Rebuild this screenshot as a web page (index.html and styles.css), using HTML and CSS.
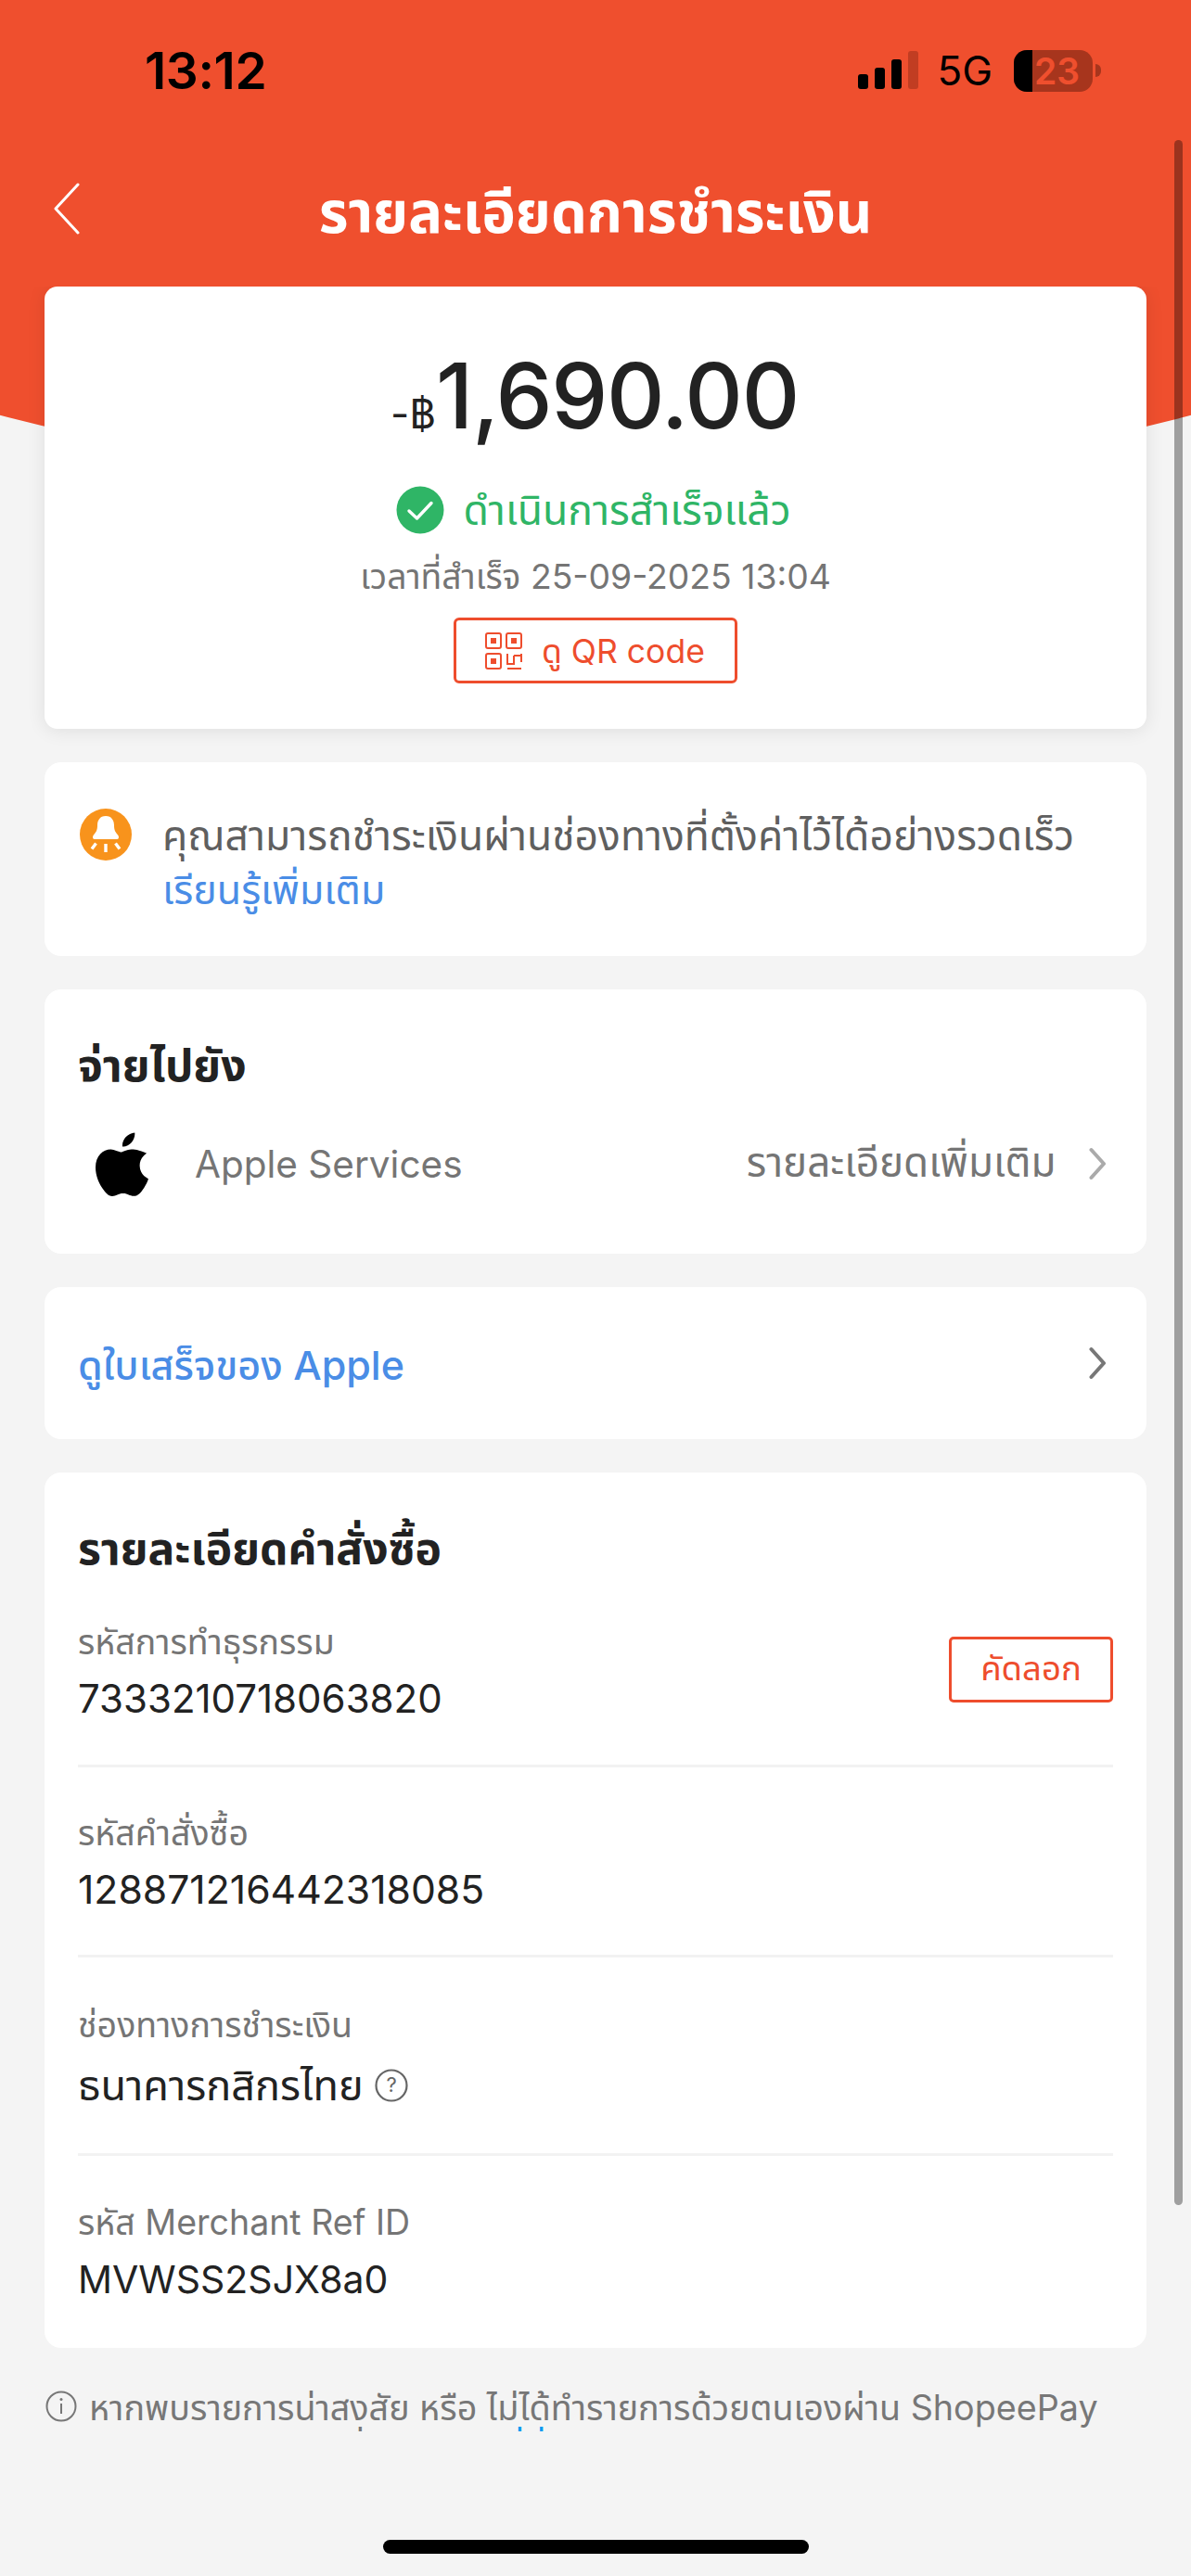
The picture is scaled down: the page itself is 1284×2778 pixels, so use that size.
FILE: index.html
```html
<!DOCTYPE html>
<html lang="th">
<head>
<meta charset="utf-8">
<title>รายละเอียดการชำระเงิน</title>
<link rel="stylesheet" href="styles.css">
</head>
<body>
<div class="screen">
  <div class="hero-bg"></div>
  <div class="statusbar">
    <span class="clock">13:12</span>
    <div class="status-right">
      <svg class="signal" width="65" height="42" viewBox="0 0 65 42"><rect x="0" y="25" width="11" height="16" rx="3" fill="#000"/><rect x="18" y="18" width="11" height="23" rx="3" fill="#000"/><rect x="36" y="9" width="11" height="32" rx="3" fill="#000"/><rect x="54" y="0" width="11" height="41" rx="3" fill="#c13d22"/></svg>
      <span class="net">5G</span>
      <div class="battery"><div class="battery-fill"></div><span class="battery-num">23</span></div>
      <div class="battery-tip"></div>
    </div>
  </div>
  <div class="navbar">
    <svg class="back" width="30" height="56" viewBox="0 0 30 56"><path d="M27 2 L3 28 L27 54" fill="none" stroke="#fff" stroke-width="3" stroke-linecap="round" stroke-linejoin="round"/></svg>
    <h1 class="title">รายละเอียดการชำระเงิน</h1>
  </div>
  <main class="content">
    <section class="card card-amount">
      <div class="amount"><span class="amount-prefix">-฿</span>1,690.00</div>
      <div class="status-line">
        <svg width="52" height="52" viewBox="0 0 52 52"><circle cx="26" cy="26" r="25.5" fill="#2fb566"/><path d="M14 27 L22.5 35 L38 18.5" fill="none" stroke="#fff" stroke-width="3.4" stroke-linecap="round" stroke-linejoin="round"/></svg>
        <span>ดำเนินการสำเร็จแล้ว</span>
      </div>
      <div class="finish-time">เวลาที่สำเร็จ 25-09-2025 13:04</div>
      <div class="qr-btn">
        <svg width="40" height="40" viewBox="0 0 40 40" fill="none" stroke="#ee4d2d" stroke-width="2"><rect x="1" y="1" width="16" height="16" rx="2"/><rect x="23" y="1" width="16" height="16" rx="2"/><rect x="1" y="23" width="16" height="16" rx="2"/><rect x="6" y="6" width="6" height="6" fill="#ee4d2d" stroke="none"/><rect x="28" y="6" width="6" height="6" fill="#ee4d2d" stroke="none"/><rect x="6" y="28" width="6" height="6" fill="#ee4d2d" stroke="none"/><path d="M24 23 V34 H31 V25 M31 25 H39 M39 23 V32 M24 39 H39"/></svg>
        <span class="qr-label">ดู QR code</span>
      </div>
    </section>

    <section class="card card-tip">
      <svg class="bell" width="56" height="56" viewBox="0 0 56 56"><circle cx="28" cy="28" r="28" fill="#f8931c"/><path d="M28 8 C21.500 8 19 13 19 18 C19 23 18 25 14.500 29 C13.500 31 14 33 16 33 H40 C42 33 42.500 31 41.500 29 C38 25 37 23 37 18 C37 13 34.500 8 28 8 Z" fill="#fff"/><path d="M28 38 V47 M17.500 37.500 L13 43.500 M38.500 37.500 L43 43.500" stroke="#fff" stroke-width="3.400" fill="none"/></svg>
      <p class="tip-text">คุณสามารถชำระเงินผ่านช่องทางที่ตั้งค่าไว้ได้อย่างรวดเร็ว <a class="link">เรียนรู้เพิ่มเติม</a></p>
    </section>

    <section class="card card-payee">
      <h2 class="section-title">จ่ายไปยัง</h2>
      <div class="payee-row">
        <svg class="apple" width="57" height="70" viewBox="0 0 814 1000"><path fill="#000" d="M788 340c-6 4-108 62-108 190 0 148 130 200 134 202-1 3-21 72-69 142-43 62-88 124-156 124s-86-40-165-40c-77 0-104 41-167 41s-106-58-156-128C43 789 0 670 0 557c0-181 118-277 234-277 62 0 113 40 152 40 37 0 95-43 165-43 27 0 123 2 237 63zM555 170c29-35 50-83 50-131 0-7-1-13-2-19-47 2-104 32-138 71-27 30-52 78-52 127 0 7 1 15 2 17 3 1 8 1 12 1 43 0 97-29 128-66z"/></svg>
        <span class="payee-name">Apple Services</span>
        <span class="payee-more">รายละเอียดเพิ่มเติม</span>
        <svg class="chev" width="18" height="36" viewBox="0 0 18 36"><path d="M2.500 3 L16 18 L2.500 33" fill="none" stroke="#aaa" stroke-width="4" stroke-linecap="round" stroke-linejoin="round"/></svg>
      </div>
    </section>

    <section class="card card-receipt">
      <span class="receipt-link">ดูใบเสร็จของ Apple</span>
      <svg class="chev" width="18" height="36" viewBox="0 0 18 36"><path d="M2.500 3 L16 18 L2.500 33" fill="none" stroke="#777" stroke-width="4" stroke-linecap="round" stroke-linejoin="round"/></svg>
    </section>

    <section class="card card-order">
      <h2 class="section-title">รายละเอียดคำสั่งซื้อ</h2>
      <div class="field field-first">
        <div class="field-body">
          <div class="field-label">รหัสการทำธุรกรรม</div>
          <div class="field-value">7333210718063820</div>
        </div>
        <div class="copy-btn">คัดลอก</div>
      </div>
      <div class="field">
        <div class="field-body">
          <div class="field-label">รหัสคำสั่งซื้อ</div>
          <div class="field-value field-value-long">128871216442318085</div>
        </div>
      </div>
      <div class="field field-bank">
        <div class="field-body">
          <div class="field-label">ช่องทางการชำระเงิน</div>
          <div class="field-value field-value-thai">ธนาคารกสิกรไทย
            <svg class="help" width="36" height="36" viewBox="0 0 36 36"><circle cx="18" cy="18" r="16.500" fill="none" stroke="#666" stroke-width="2.200"/><text x="18" y="25" text-anchor="middle" class="help-q">?</text></svg>
          </div>
        </div>
      </div>
      <div class="field field-last">
        <div class="field-body">
          <div class="field-label">รหัส Merchant Ref ID</div>
          <div class="field-value field-value-ref">MVWSS2SJX8a0</div>
        </div>
      </div>
    </section>

    <div class="note">
      <svg class="note-i" width="34" height="34" viewBox="0 0 34 34"><circle cx="17" cy="17" r="15.500" fill="none" stroke="#777" stroke-width="2"/><path d="M17 14 V25" stroke="#777" stroke-width="2"/><circle cx="17" cy="9.500" r="1.500" fill="#777"/></svg>
      <p class="note-text">หากพบรายการน่าสงสัย หรือ ไม่ได้ทำรายการด้วยตนเองผ่าน ShopeePay<br>โปรดติดต่อเจ้าหน้าที่ได้ทันทีกด<a class="note-link">ที่นี่</a></p>
    </div>
  </main>
  <div class="scrollbar"></div>
  <div class="home-indicator"></div>
</div>
</body>
</html>
```
FILE: styles.css
```css
* { box-sizing: border-box; }
html, body { margin: 0; padding: 0; }
body { background: #f4f4f4; font-family: Inter, "Noto Sans", "Noto Sans Thai", "Open Sans", sans-serif; }
.screen { position: relative; width: 1284px; height: 2778px; overflow: hidden; background: #f4f4f4; }
.hero-bg { position: absolute; left: 0; top: 0; width: 1284px; height: 600px; background: #ef4f2e; clip-path: ellipse(1000px 318px at 642px 204px); }
.statusbar { position: relative; height: 152px; padding: 46px 97px 0 156px; display: flex; justify-content: space-between; align-items: flex-start; }
.clock { font-size: 55px; line-height: 60px; font-weight: 600; color: #000; letter-spacing: -0.4px; }
.status-right { display: flex; align-items: center; height: 56px; margin-top: 2px; }
.signal { margin-right: 20.5px; }
.net { font-size: 44px; font-weight: 400; color: #000; line-height: 46px; margin-right: 23px; }
.battery { position: relative; width: 85px; height: 45px; border-radius: 14px; overflow: hidden; background: #a7351d; display: flex; align-items: center; justify-content: center; padding-left: 8px; }
.battery-fill { position: absolute; left: 0; top: 0; bottom: 0; width: 20px; background: #000; }
.battery-num { position: relative; font-size: 39px; font-weight: 600; color: #ef4f2e; line-height: 45px; }
.battery-tip { width: 6px; height: 14px; margin-left: 3px; background: #a7351d; border-radius: 0 8px 8px 0; }
.navbar { position: relative; height: 157px; padding-bottom: 3px; display: flex; align-items: center; justify-content: center; }
.back { position: absolute; left: 57px; top: 45px; }
.title { margin: 0; font-size: 61.3px; line-height: 70px; font-weight: 700; color: #fff; }
.content { position: relative; height: 2313px; overflow: hidden; padding: 0 48px; display: flex; flex-direction: column; gap: 36px; }
.card { background: #fff; border-radius: 18px; flex: none; }
.card-amount { height: 477px; border-radius: 14px; box-shadow: 0 2px 20px rgba(0,0,0,.09); display: flex; flex-direction: column; align-items: center; padding-top: 59px; }
.amount { font-size: 97px; line-height: 118px; height: 118px; font-weight: 500; color: #222; letter-spacing: -1.3px; margin-left: -2px; }
.amount-prefix { font-size: 44px; line-height: 1; font-weight: 400; letter-spacing: 0; }
.status-line { display: flex; align-items: center; gap: 20px; margin: 36px 4px 0 0; font-size: 44.5px; line-height: 56px; height: 56px; color: #2fb566; }
.finish-time { margin-top: 16px; font-size: 37.3px; line-height: 56px; height: 56px; color: #757575; }
.qr-btn { display: flex; align-items: center; gap: 21px; margin-top: 16px; width: 306px; height: 71px; padding-left: 31px; border: 3px solid #ee4d2d; border-radius: 6px; color: #ee4d2d; font-size: 35.5px; }
.qr-label { padding-top: 4px; }
.card-tip { height: 209px; display: flex; padding: 50px 30px 0 38px; gap: 33px; }
.bell { flex: none; }
.tip-text { margin: 0; font-size: 44.4px; line-height: 58px; color: #5f5f5f; white-space: nowrap; }
.link { color: #4a8de6; display: block; font-size: 43px; }
.card-payee { height: 285px; padding: 52px 44px 0 36px; }
.section-title { margin: 0; font-size: 48px; line-height: 60px; font-weight: 700; color: #222; }
.payee-row { display: flex; align-items: center; margin-top: 38px; height: 76px; }
.apple { margin-left: 19px; margin-right: 50px; }
.payee-name { font-size: 40.5px; color: #757575; flex: 1; }
.payee-more { font-size: 44px; color: #757575; margin-right: 35.5px; }
.card-receipt { height: 164px; padding: 0 44px 0 36px; display: flex; align-items: center; justify-content: space-between; }
.receipt-link { font-size: 43px; color: #4a8de6; font-weight: 500; padding-top: 8px; }
.card-order { height: 944px; padding: 52px 36px 0; }
.field { display: flex; align-items: flex-start; justify-content: space-between; padding-top: 43px; height: 205px; border-bottom: 3px solid #f2f2f2; }
.field-first { height: 206px; padding-top: 43px; }
.field-bank { height: 214px; padding-top: 45px; }
.field-last { border-bottom: 0; padding-top: 44px; }
.field-label { font-size: 37.5px; line-height: 56px; color: #757575; }
.field-value { font-size: 42px; line-height: 58px; color: #222; margin-top: 4px; display: flex; align-items: center; gap: 12px; }
.field-value-long { font-size: 42.7px; }
.field-value-thai { font-size: 45px; margin-top: 8px; }
.field-value-ref { font-size: 41px; }
.copy-btn { width: 177px; height: 71px; margin-top: 22px; display: flex; align-items: center; justify-content: center; border: 3px solid #ee4d2d; border-radius: 5px; color: #ee4d2d; font-size: 36.5px; }
.help-q { font-size: 22px; fill: #666; }
.note { display: flex; align-items: flex-start; gap: 13px; margin-top: -4px; flex: none; margin-left: 1px; }
.note-i { flex: none; margin-top: 14px; }
.note-text { margin: 0; padding-top: 9.5px; font-size: 37.7px; line-height: 45px; color: #777; white-space: nowrap; }
.note-link { color: #0a9af0; }
.scrollbar { position: absolute; left: 1266px; top: 151px; width: 9px; height: 2227px; border-radius: 5px; background: rgba(0,0,0,.35); }
.home-indicator { position: absolute; left: 413px; top: 2739px; width: 459px; height: 15px; border-radius: 8px; background: #000; }
```
